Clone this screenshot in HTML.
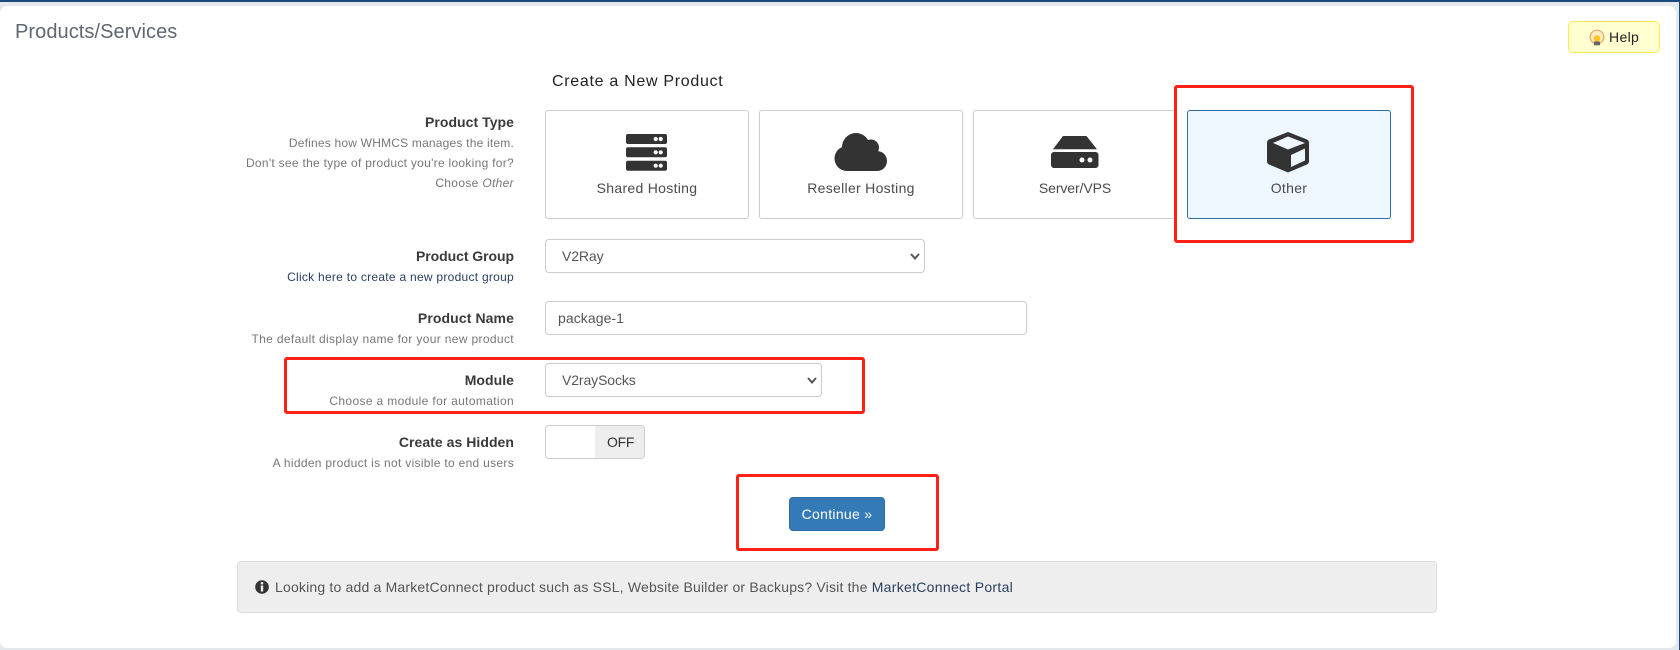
<!DOCTYPE html>
<html lang="en"><head><meta charset="utf-8"><title>Products/Services</title>
<style>
html,body{margin:0;padding:0;width:1680px;height:650px;overflow:hidden;background:#e3e8ec;font-family:"Liberation Sans",sans-serif}
body{position:relative}
.top{position:absolute;left:0;top:0;width:1680px;height:2px;background:#1a4a7c}
.rs{position:absolute;right:0;top:0;width:1px;height:650px;background:#1a4a7c}
.panel{position:absolute;left:0;top:6px;width:1676px;height:642px;background:#fff;border-radius:7px}
.a{position:absolute;white-space:nowrap;line-height:20px}
.lb{right:1166px;font-size:14px;font-weight:bold;color:#3a3a3a;letter-spacing:.05px}
.sb{right:1166px;font-size:12px;color:#777;letter-spacing:.33px}
.card{position:absolute;top:110px;height:107px;box-sizing:content-box;border:1px solid #ccc;border-radius:3px;background:#fff}
.card.on{background:#eef7ff;border-color:#2f6da5}
.ct{position:absolute;top:193px;font-size:14px;line-height:20px;color:#4a4a4a;text-align:center;margin-top:-15px;letter-spacing:.3px}
.fc{position:absolute;box-sizing:border-box;height:34px;border:1px solid #ccc;border-radius:4px;background:#fff;margin:0;font:14px "Liberation Sans",sans-serif;color:#555;outline:0;appearance:none;-webkit-appearance:none}
select.fc{padding:0 0 0 16px;letter-spacing:-.1px}
input.fc{padding:0 0 0 12px;letter-spacing:.07px}
.red{position:absolute;box-sizing:border-box;border:3px solid #ff2016;border-radius:3px}
svg{position:absolute;overflow:visible}
.btn{position:absolute;left:789px;top:497px;width:96px;height:34px;box-sizing:border-box;background:#337ab7;border:1px solid #2e6da4;border-radius:4px;color:#fff;font:14px/32px "Liberation Sans",sans-serif;text-align:center;letter-spacing:.3px;padding:0;margin:0}
.help{position:absolute;left:1568px;top:21px;width:92px;height:32px;box-sizing:border-box;background:#ffffd0;border:1px solid #ffe94d;border-radius:5px}
.tog{position:absolute;left:545px;top:425px;width:100px;height:34px;box-sizing:border-box;border:1px solid #ccc;border-radius:4px;background:#fff;overflow:hidden}
.tog i{position:absolute;left:49px;top:0;width:50px;height:32px;background:#eee}
.alert{position:absolute;left:237px;top:561px;width:1200px;height:52px;box-sizing:border-box;border:1px solid #ddd;border-radius:4px;background:#eee}
a{color:#2a3f5f;text-decoration:none}
</style></head><body>
<div class="top"></div><div class="rs"></div>
<div class="panel"></div>

<div class="a" style="left:15px;top:22px;font-size:20px;color:#5f6770;letter-spacing:.07px">Products/Services</div>
<div class="help"></div>
<svg style="left:0;top:0" width="1680" height="650">
  <circle cx="1597" cy="37" r="6.800" fill="#ffeec4" stroke="#eda65f" stroke-width="1.200"/>
  <circle cx="1597" cy="38.500" r="3.200" fill="#ffc21f"/>
  <rect x="1594" y="41.500" width="6" height="3.800" fill="#666"/>
</svg>
<div class="a" style="left:1609px;top:27px;font-size:14px;color:#222;letter-spacing:.35px">Help</div>

<div class="a" style="left:552px;top:72px;font-size:16px;color:#222;letter-spacing:.7px">Create a New Product</div>

<div class="a lb" style="top:112px">Product Type</div>
<div class="a sb" style="top:133px;letter-spacing:.2px">Defines how WHMCS manages the item.</div>
<div class="a sb" style="top:153px;letter-spacing:.285px">Don't see the type of product you're looking for?</div>
<div class="a sb" style="top:173px">Choose <em>Other</em></div>

<div class="card" style="left:545px;width:202px"></div>
<div class="card" style="left:759px;width:202px"></div>
<div class="card" style="left:973px;width:202px"></div>
<div class="card on" style="left:1187px;width:202px"></div>

<svg style="left:0;top:0" width="1680" height="650" fill="#333">
  <rect x="626" y="134" width="41" height="10" rx="2"/>
  <rect x="626" y="147.300" width="41" height="10" rx="2"/>
  <rect x="626" y="160.700" width="41" height="10" rx="2"/>
  <g fill="#fff">
    <circle cx="655.700" cy="139" r="2.100"/><circle cx="660.700" cy="139" r="2.100"/>
    <circle cx="655.700" cy="152.300" r="2.100"/><circle cx="660.700" cy="152.300" r="2.100"/>
    <circle cx="655.700" cy="165.700" r="2.100"/><circle cx="660.700" cy="165.700" r="2.100"/>
  </g>
  <circle cx="856" cy="147" r="14"/><circle cx="871" cy="147.500" r="8"/>
  <circle cx="847" cy="158.500" r="12.500"/><circle cx="877" cy="161" r="10"/>
  <rect x="847" y="148" width="30" height="23"/>
  <path d="M1063.500 136H1085.500Q1087 136 1088 138L1097 149.300H1053L1061.500 138Q1062.500 136 1063.500 136Z"/>
  <rect x="1051" y="152" width="47.500" height="16" rx="3"/>
  <circle cx="1082" cy="160" r="2.500" fill="#fff"/><circle cx="1090" cy="160" r="2.500" fill="#fff"/>
  <path d="M1288 132L1307 139.500Q1309 140.500 1309 143V161Q1309 163.500 1307 164.500L1288 172.500L1269 164.500Q1267 163.500 1267 161V143Q1267 140.500 1269 139.500Z"/>
  <path d="M1288 136.500L1305 143L1288 149.500L1273 143Z" fill="#eef7ff"/>
  <path d="M1291 155L1305 148.500V160.500L1291 167Z" fill="#eef7ff"/>
</svg>
<div class="ct" style="left:545px;width:204px">Shared Hosting</div>
<div class="ct" style="left:759px;width:204px">Reseller Hosting</div>
<div class="ct" style="left:973px;width:204px;letter-spacing:-.1px">Server/VPS</div>
<div class="ct" style="left:1187px;width:204px">Other</div>

<div class="a lb" style="top:246px;letter-spacing:-.06px">Product Group</div>
<div class="a sb" style="top:267px;letter-spacing:.27px"><a href="#">Click here to create a new product group</a></div>
<select class="fc" style="left:545px;top:239px;width:380px"><option>V2Ray</option></select>

<div class="a lb" style="top:308px;letter-spacing:.1px">Product Name</div>
<div class="a sb" style="top:329px;letter-spacing:.35px">The default display name for your new product</div>
<input class="fc" style="left:545px;top:301px;width:482px" value="package-1">

<div class="a lb" style="top:370px">Module</div>
<div class="a sb" style="top:391px;letter-spacing:.35px">Choose a module for automation</div>
<select class="fc" style="left:545px;top:363px;width:277px"><option>V2raySocks</option></select>

<div class="a lb" style="top:432px">Create as Hidden</div>
<div class="a sb" style="top:453px;letter-spacing:.3px">A hidden product is not visible to end users</div>
<div class="tog"><i></i></div>
<div class="a" style="left:607px;top:432px;font-size:14px;color:#333;letter-spacing:-.3px">OFF</div>

<svg style="left:0;top:0;pointer-events:none" width="1680" height="650" fill="none" stroke="#555" stroke-width="2">
  <path d="M911 254L915 258.500L919 254"/>
  <path d="M808 378L812 382.500L816 378"/>
</svg>

<button class="btn">Continue »</button>

<div class="alert"></div>
<svg style="left:0;top:0" width="1680" height="650">
  <circle cx="262" cy="587" r="6.800" fill="#333"/>
  <rect x="260.800" y="582" width="2.400" height="2.400" fill="#eee"/>
  <rect x="260.800" y="585.500" width="2.400" height="6" fill="#eee"/>
</svg>
<div class="a" style="left:275px;top:577px;font-size:14px;color:#555;letter-spacing:.185px">Looking to add a MarketConnect product such as SSL, Website Builder or Backups? Visit the <a href="#" style="letter-spacing:.3px">MarketConnect Portal</a></div>

<div class="red" style="left:1174px;top:85px;width:240px;height:158px"></div>
<div class="red" style="left:284px;top:357px;width:581px;height:57px"></div>
<div class="red" style="left:736px;top:474px;width:203px;height:77px"></div>
</body></html>
